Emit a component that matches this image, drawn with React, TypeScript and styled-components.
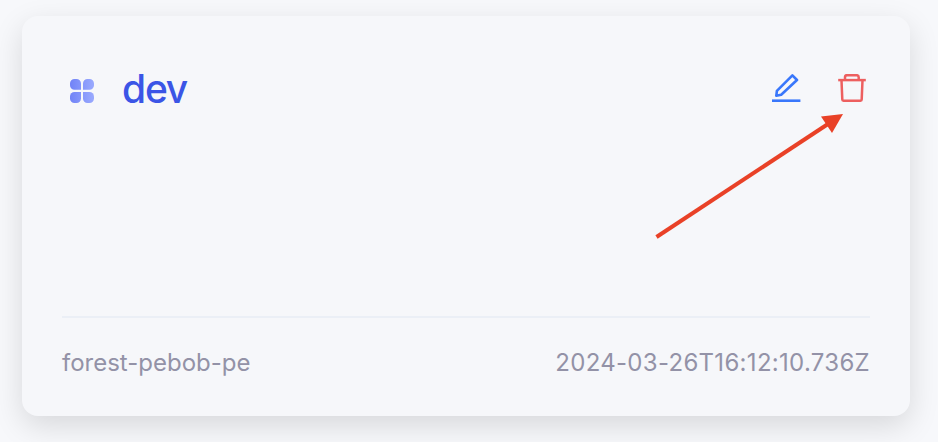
import React from "react";
import styled, { createGlobalStyle } from "styled-components";

const GlobalStyle = createGlobalStyle`
  * { box-sizing: border-box; }
  body {
    margin: 0;
    background: #f7f8fb;
    font-family: Inter, "Liberation Sans", sans-serif;
    overflow: hidden;
  }
`;

const Page = styled.main`
  position: relative;
  height: 442px;
  padding: 16px 28px 26px 22px;
`;

const Card = styled.section`
  display: flex;
  flex-direction: column;
  height: 400px;
  padding: 44px 40px 0;
  border-radius: 16px;
  background: #f6f7fa;
  box-shadow: 0 10px 30px rgba(0, 0, 0, 0.13);
`;

const Header = styled.header`
  display: flex;
  align-items: center;
  height: 60px;
  padding: 0 2px 0 8px;
`;

const Title = styled.h1<{ $color: string }>`
  margin: 0 auto 0 28px;
  padding-bottom: 2px;
  color: ${(p) => p.$color};
  font-size: 39px;
  font-weight: 450;
  line-height: 58px;
  letter-spacing: -1.2px;
`;

const Actions = styled.div`
  display: flex;
  gap: 34px;
`;

const IconButton = styled.button<{ $color: string }>`
  display: flex;
  width: 32px;
  height: 32px;
  padding: 0;
  border: 0;
  background: none;
  color: ${(p) => p.$color};
`;

const Footer = styled.footer`
  display: flex;
  justify-content: space-between;
  height: 100px;
  margin-top: auto;
  border-top: 2px solid #ebeff6;
  color: #9392a7;
  font-size: 24px;
  line-height: 90px;
`;

const Meta = styled.span<{ $spacing: number }>`
  letter-spacing: ${(p) => p.$spacing}px;
`;

const Pointer = styled.svg`
  position: absolute;
  left: 640px;
  top: 100px;
  pointer-events: none;
`;

const AppIcon = () => (
  <svg width="24" height="26" viewBox="0 0 24 26">
    <defs>
      <linearGradient id="clover" x1="0" x2="24" y1="0" y2="0" gradientUnits="userSpaceOnUse">
        <stop stopColor="#7183f7" />
        <stop offset="1" stopColor="#9aaafe" />
      </linearGradient>
    </defs>
    <g fill="url(#clover)">
      <path d="M4.5 2H6.5a4.5 4.5 0 0 1 4.5 4.5v6.2H4.5a4.5 4.5 0 0 1-4.5-4.5V6.5a4.5 4.5 0 0 1 4.5-4.5Z" />
      <path d="M19.5 2H17.5a4.5 4.5 0 0 0-4.5 4.5v6.2h6.5a4.5 4.5 0 0 0 4.5-4.5V6.5a4.5 4.5 0 0 0-4.5-4.5Z" />
      <path d="M4.5 26H6.5a4.5 4.5 0 0 0 4.5-4.5V15H4.5a4.5 4.5 0 0 0-4.5 4.5v2a4.5 4.5 0 0 0 4.5 4.5Z" />
      <path d="M19.5 26H17.5a4.5 4.5 0 0 1-4.5-4.5V15h6.5a4.5 4.5 0 0 1 4.5 4.5v2a4.5 4.5 0 0 1-4.5 4.5Z" />
    </g>
  </svg>
);

const EditIcon = () => (
  <svg width="32" height="32" viewBox="0 0 32 32" fill="none" stroke="currentColor" strokeWidth="2.6" strokeLinejoin="round">
    <path d="M22.4 1.4 27 6 11.2 20.8 6.3 21.8 6.9 16.8Z" />
    <path d="M2 26.7h28.4" />
  </svg>
);

const TrashIcon = () => (
  <svg width="32" height="32" viewBox="0 0 32 32" fill="none" stroke="currentColor" strokeWidth="2.5" strokeLinejoin="round">
    <path d="M2.2 6.1h27.6" />
    <path d="M9 6V3.2a2 2 0 0 1 2-2h9.7a2 2 0 0 1 2 2V6" />
    <path d="M5.5 6.2 6.3 25.6a1.2 1.2 0 0 0 1.2 1.2h17a1.2 1.2 0 0 0 1.2-1.2L26.5 6.2" />
  </svg>
);

export default function App() {
  return (
    <>
      <GlobalStyle />
      <Page>
        <Card>
          <Header>
            <AppIcon />
            <Title $color="#3b55e6">dev</Title>
            <Actions>
              <IconButton $color="#3977fb" aria-label="Edit">
                <EditIcon />
              </IconButton>
              <IconButton $color="#ed5f5f" aria-label="Delete">
                <TrashIcon />
              </IconButton>
            </Actions>
          </Header>
          <Footer>
            <Meta $spacing={0}>forest-pebob-pe</Meta>
            <Meta $spacing={0.3}>2024-03-26T16:12:10.736Z</Meta>
          </Footer>
        </Card>
        <Pointer width="210" height="145" viewBox="0 0 210 145">
          <path d="M16.5 137 188 24" stroke="#e94127" strokeWidth="4" />
          <path d="M203 14 181 16.5 192 33Z" fill="#e94127" />
        </Pointer>
      </Page>
    </>
  );
}
